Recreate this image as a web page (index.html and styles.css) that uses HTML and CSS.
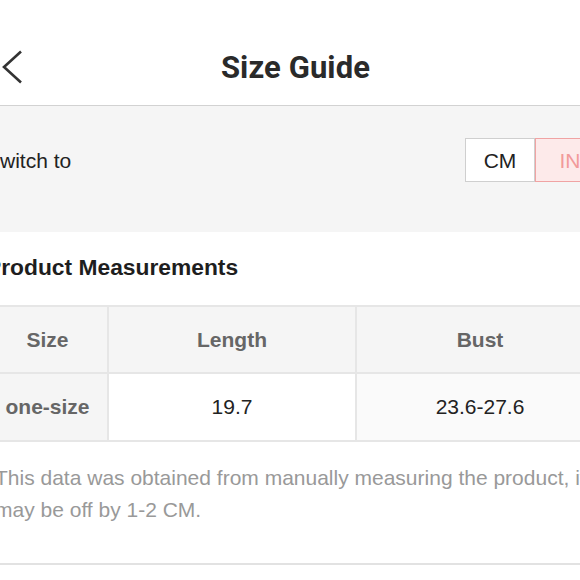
FILE: index.html
```html
<!DOCTYPE html>
<html lang="en">
<head>
<meta charset="utf-8">
<title>Size Guide</title>
<link rel="stylesheet" href="styles.css">
</head>
<body>
<div class="phone">
  <header class="topbar">
    <div class="back">
      <svg class="back-icon" viewBox="0 0 24 36" width="24" height="36" aria-hidden="true">
        <path d="M21 1.5 L4 17 L21 32.5" fill="none" stroke="#333" stroke-width="2.6" stroke-linejoin="miter"/>
      </svg>
    </div>
    <h1 class="title">Size Guide</h1>
    <div></div>
  </header>

  <section class="switch">
    <span class="switch-label">Switch to</span>
    <div class="toggle">
      <span class="unit">CM</span>
      <span class="unit active">IN</span>
    </div>
  </section>

  <section class="measure">
    <h2 class="measure-title">Product Measurements</h2>
    <div class="table">
      <div class="cell head">Size</div>
      <div class="cell head">Length</div>
      <div class="cell head">Bust</div>
      <div class="cell size">one-size</div>
      <div class="cell val white">19.7</div>
      <div class="cell val light">23.6-27.6</div>
    </div>
    <p class="note">This data was obtained from manually measuring the product, it may be off by 1-2 CM.</p>
  </section>
</div>
</body>
</html>
```

FILE: styles.css
```css
html, body {
  margin: 0;
  padding: 0;
  background: #fff;
  overflow: hidden;
  width: 580px;
  height: 580px;
}

.phone {
  width: 619px;
  margin-left: -14px;
  font-family: "Liberation Sans", Arial, sans-serif;
  color: #222;
}

.topbar {
  height: 75px;
  padding-top: 30px;
  display: grid;
  grid-template-columns: 1fr auto 1fr;
  align-items: center;
  border-bottom: 1px solid #d2d2d2;
  background: #fff;
}

.back {
  padding-left: 14px;
  display: flex;
  align-items: center;
}

.back-icon {
  display: block;
}

.title {
  margin: 0;
  font-family: Roboto, "Liberation Sans", sans-serif;
  font-weight: 700;
  font-size: 31px;
  color: #2a2a2a;
  letter-spacing: 0.1px;
}

.switch {
  background: #f5f5f5;
  height: 126px;
  box-sizing: border-box;
  padding-top: 32px;
  display: flex;
  align-items: flex-start;
  justify-content: space-between;
}

.switch-label {
  font-size: 21px;
  line-height: 46px;
  color: #222;
}

.toggle {
  display: flex;
}

.unit {
  width: 70px;
  height: 44px;
  box-sizing: border-box;
  border: 1px solid #cfcfcf;
  background: #fff;
  display: flex;
  align-items: center;
  justify-content: center;
  font-size: 21px;
  padding-top: 1px;
  color: #222;
}

.unit.active {
  border-color: #f0a3a3;
  background: #fdeaea;
  color: #f29a9a;
}

.measure {
  padding-top: 20px;
  border-bottom: 2px solid #e2e2e2;
  padding-bottom: 37px;
}

.measure-title {
  margin: 0 0 22px;
  font-size: 22.8px;
  line-height: 31px;
  font-weight: 700;
  color: #1e1e1e;
}

.table {
  display: grid;
  grid-template-columns: 119px 246px 246px;
  grid-template-rows: 65px 66px;
  gap: 2px;
  padding: 2px;
  background: #e6e6e6;
}

.cell {
  display: flex;
  align-items: center;
  justify-content: center;
  font-size: 21px;
}

.cell.head {
  background: #f5f5f5;
  font-weight: 700;
  color: #666;
}

.cell.size {
  background: #f5f5f5;
  font-weight: 700;
  color: #666;
}

.cell.val {
  color: #222;
}

.cell.white {
  background: #fff;
}

.cell.light {
  background: #fafafa;
}

.note {
  margin: 20px 0 0;
  padding-left: 9px;
  font-size: 21px;
  line-height: 32px;
  color: #999;
}
```
